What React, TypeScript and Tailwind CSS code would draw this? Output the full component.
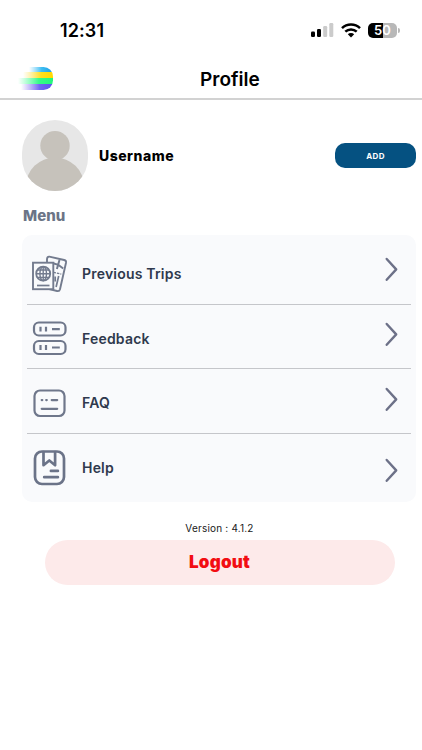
import type { ReactNode } from 'react';

//icons
const Logo = () => (
	<svg width="38" height="28" viewBox="0 0 38 28">
		<defs>
			<clipPath id="logoShape">
				<path d="M0 2h25.500a9.500 9.500 0 0 1 9.500 9.500v4a9.500 9.500 0 0 1-9.500 9.500H0z" />
			</clipPath>
			<linearGradient id="blue" gradientUnits="userSpaceOnUse" x1="11" x2="34" y1="0" y2="0">
				<stop offset="0" stopColor="#5cc8fa" stopOpacity="0" />
				<stop offset="0.55" stopColor="#3dbdf2" />
				<stop offset="1" stopColor="#1c9fe6" />
			</linearGradient>
			<linearGradient id="yellow" gradientUnits="userSpaceOnUse" x1="5" x2="35" y1="0" y2="0">
				<stop offset="0" stopColor="#ffe14d" stopOpacity="0" />
				<stop offset="0.6" stopColor="#ffdf1f" />
				<stop offset="1" stopColor="#ffd900" />
			</linearGradient>
			<linearGradient id="green" gradientUnits="userSpaceOnUse" x1="0" x2="35" y1="0" y2="0">
				<stop offset="0" stopColor="#4dff9a" stopOpacity="0" />
				<stop offset="0.6" stopColor="#36fa88" />
				<stop offset="1" stopColor="#24f57c" />
			</linearGradient>
			<linearGradient id="violet" gradientUnits="userSpaceOnUse" x1="3" x2="34" y1="0" y2="0">
				<stop offset="0" stopColor="#8f75f5" stopOpacity="0" />
				<stop offset="0.6" stopColor="#7267f2" />
				<stop offset="1" stopColor="#5c52ef" />
			</linearGradient>
		</defs>
		<g clipPath="url(#logoShape)">
			<rect x="10" y="2" width="26" height="5" fill="url(#blue)" />
			<rect x="4" y="7" width="32" height="6" fill="url(#yellow)" />
			<rect x="0" y="13" width="36" height="6" fill="url(#green)" />
			<rect x="2" y="19" width="34" height="6" fill="url(#violet)" />
		</g>
	</svg>
);

const Signal = () => (
	<svg width="23" height="14" viewBox="0 0 23 14">
		<rect x="0" y="8.500" width="4" height="5.500" rx="1.200" fill="#000" />
		<rect x="6" y="6" width="4" height="8" rx="1.200" fill="#000" />
		<rect x="12.200" y="3" width="4" height="11" rx="1.200" fill="#cbcbcb" />
		<rect x="18.300" y="0" width="4" height="14" rx="1.200" fill="#cbcbcb" />
	</svg>
);

const Wifi = () => (
	<svg width="20" height="15" viewBox="0 0 20 15" fill="none" stroke="#000" strokeWidth="2.500">
		<path d="M1 5.200a12.900 12.900 0 0 1 18 0" />
		<path d="M4.300 8.700a8.200 8.200 0 0 1 11.400 0" />
		<path d="M6.800 11.200a4.600 4.600 0 0 1 6.400 0L10 14.400z" fill="#000" stroke="none" />
	</svg>
);

const Chevron = () => (
	<svg width="13" height="25" viewBox="0 0 13 25" fill="none" stroke="#6d7188" strokeWidth="2.400">
		<path d="M1.700 2l9.500 10.400L1.700 22.800" strokeLinecap="round" strokeLinejoin="round" />
	</svg>
);

const TripsIcon = () => (
	<svg width="36" height="38" viewBox="0 0 36 38" fill="none" stroke="#737b8e" strokeWidth="1.900">
		<path d="M17.300 1.600L32.200 5q2.200.6 1.800 2.700L28 34.200q-.6 2.300-2.900 1.800L15 33.600V4q.3-2.600 2.300-2.400z" />
		<path d="M27.500 5l-2.600 9M21 8.300l5.400 1.600M26.200 9.700l5 3.800" strokeWidth="2" />
		<path d="M21.500 17.300l7.800 1.800" strokeWidth="1.200" strokeDasharray="2.500 1" />
		<path d="M26.700 21l-2.600 11M23.200 21.500v5" strokeWidth="1.700" />
		<rect x="1" y="7.700" width="20.300" height="26.500" fill="#f9fafc" />
		<circle cx="11.200" cy="18.700" r="7" strokeWidth="1.800" />
		<ellipse cx="11.200" cy="18.700" rx="3.300" ry="7" strokeWidth="1.400" />
		<path d="M11.200 11.700v14M4.200 18.700h14M5.500 15h11.400M5.500 22.400h11.400" strokeWidth="1.400" />
		<path d="M5 30.500h12.500" strokeWidth="1.700" />
	</svg>
);

const FeedbackIcon = () => (
	<svg width="36" height="36" viewBox="0 0 36 36" fill="none" stroke="#6f778b" strokeWidth="2.200">
		<rect x="2" y="2.500" width="31.500" height="13" rx="4.800" />
		<rect x="2" y="21" width="31.500" height="13" rx="4.800" />
		<path d="M8.500 6.700v4.800M14 6.700v4.800M20 9.100h7.800M8.500 25.100v4.800M14 25.100v4.800M20 27.500h7.800" />
	</svg>
);

const FaqIcon = () => (
	<svg width="36" height="30" viewBox="0 0 36 30" fill="none" stroke="#6f778b" strokeWidth="2.200">
		<rect x="2.500" y="2.500" width="30" height="25.500" rx="5.500" />
		<path d="M9.700 12.100h.6M14.200 12.100h.6M19.700 12.100h5.500M9.700 20.800h15.500" strokeLinecap="round" />
	</svg>
);

const HelpIcon = () => (
	<svg width="36" height="38" viewBox="0 0 36 38" fill="none" stroke="#6b7388" strokeWidth="2.700">
		<rect x="3" y="2.500" width="29" height="32.500" rx="7" />
		<path
			d="M11.500 3v13.200l5.800-4.700 5.800 4.700V3M18.900 21.900h7M12.200 28.200h13.700"
			strokeLinecap="round"
			strokeLinejoin="round"
		/>
	</svg>
);

const Avatar = () => (
	<svg width="66" height="71" viewBox="0 0 66 71">
		<clipPath id="avatarShape">
			<rect width="66" height="71" rx="33" />
		</clipPath>
		<g clipPath="url(#avatarShape)">
			<rect width="66" height="71" fill="#e7e7e7" />
			<circle cx="33" cy="25.700" r="14.700" fill="#c6c2bb" />
			<ellipse cx="33" cy="66" rx="29" ry="28.500" fill="#c6c2bb" />
		</g>
	</svg>
);

interface MenuItemProps {
	label: string;
	icon: ReactNode;
	rowStyle: string;
	labelStyle: string;
	chevronStyle: string;
}

const menuItems: MenuItemProps[] = [
	{
		label: 'Previous Trips',
		icon: <TripsIcon />,
		rowStyle: 'h-[69.500px] pt-[9px] border-b border-[#c5c6ca]',
		labelStyle: 'tracking-[0.2px]',
		chevronStyle: 'pb-2',
	},
	{
		label: 'Feedback',
		icon: <FeedbackIcon />,
		rowStyle: 'h-16 pt-1 border-b border-[#c5c6ca]',
		labelStyle: 'tracking-[0.2px]',
		chevronStyle: 'pb-[7px]',
	},
	{
		label: 'FAQ',
		icon: <FaqIcon />,
		rowStyle: 'h-[65px] pt-1 border-b border-[#c5c6ca]',
		labelStyle: 'tracking-[0.2px]',
		chevronStyle: 'pb-[7px]',
	},
	{
		label: 'Help',
		icon: <HelpIcon />,
		rowStyle: 'h-[68px]',
		labelStyle: 'tracking-[0.2px] pb-px',
		chevronStyle: 'pt-[5px]',
	},
];

const MenuItem = ({ label, icon, rowStyle, labelStyle, chevronStyle }: MenuItemProps) => (
	<li>
		<button className={`flex w-full items-center pl-[5px] pr-[13px] ${rowStyle}`}>
			{icon}
			<span className={`ml-[14px] text-[14px] font-semibold text-[#2f394d] ${labelStyle}`}>{label}</span>
			<span className={`ml-auto ${chevronStyle}`}>
				<Chevron />
			</span>
		</button>
	</li>
);

export default function App() {
	return (
		<div className="flex h-[750px] w-[422px] flex-col overflow-hidden bg-white font-['Inter',sans-serif] text-black">
			{/*Status bar*/}
			<div className="flex h-[60px] items-center pl-[60px] pr-[22px]">
				<span className="pt-px text-[18px] font-semibold leading-none tracking-[0.1px]">12:31</span>
				<div className="ml-auto flex items-center">
					<Signal />
					<span className="ml-[7px]">
						<Wifi />
					</span>
					<span className="ml-[7px] flex h-[15px] w-[29px] items-center justify-center rounded-[5px] bg-linear-to-r from-black from-50% to-[#b8b8b8] to-50% text-[13px] font-semibold leading-none text-white">
						50
					</span>
					<span className="ml-px h-[5px] w-[2px] rounded-r-full bg-[#b8b8b8]" />
				</div>
			</div>

			<header className="grid h-10 grid-cols-[182px_1fr] items-center border-b-2 border-[#d2d2d2] pl-[18px]">
				<Logo />
				<h1 className="pt-px text-[19px] font-semibold leading-none">Profile</h1>
			</header>

			<main className="flex flex-col pl-[22px] pr-[6px] pt-5">
				{/*User*/}
				<section className="flex items-center">
					<Avatar />
					<span className="ml-[11px] text-[14px] font-extrabold tracking-[0.5px]">Username</span>
					<button className="ml-auto h-[25px] w-[81px] rounded-[10px] bg-[#055181] text-[8px] font-bold tracking-[0.35px] text-white">
						ADD
					</button>
				</section>

				<h2 className="ml-px mt-[13px] text-[15px] font-extrabold leading-6 text-[#6b7486]">Menu</h2>

				<ul className="mt-[7px] h-[267px] rounded-[10px] bg-[#f9fafc] px-[5px]">
					{menuItems.map((item) => (
						<MenuItem key={item.label} {...item} />
					))}
				</ul>
			</main>

			<footer className="flex flex-col items-center pl-[17px]">
				<p className="mt-[18px] text-[10px] leading-4 tracking-[0.2px] text-[#202020]">Version : 4.1.2</p>
				<button className="mt-1 h-[45px] w-[350px] rounded-full bg-[#fdeaea] pt-px text-[17px] font-black tracking-[0.2px] text-[#f20d12]">
					Logout
				</button>
			</footer>
		</div>
	);
}
